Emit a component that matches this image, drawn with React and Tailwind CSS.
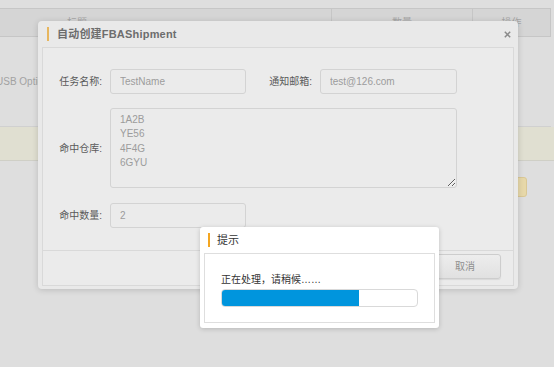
export default function App() {
  const font = "font-['Liberation_Sans','Noto_Sans_CJK_SC',sans-serif]";

  return (
    <div className={`relative w-[554px] h-[367px] overflow-hidden bg-[#dedede] ${font}`}>
      {/* page behind the overlay */}
      <div className="pt-[8px]">
        <div className="w-[551px] h-[29px] flex border-y border-r border-[#c6c6c6] bg-[#d5d5d5] text-[10px] text-[#a6a6a6]">
          <div className="w-[331px] pl-[67px] flex items-center">标题</div>
          <div className="w-[141px] border-l border-[#c6c6c6] flex items-center justify-center">数量</div>
          <div className="flex-1 border-l border-[#c6c6c6] flex items-center justify-center">操作</div>
        </div>

        <div className="w-[551px] h-[90px] flex items-center border-b border-[#d0d0d0] text-[10px] text-[#a2a2a2]">
          <div className="-ml-[4px] whitespace-nowrap">USB Optic</div>
        </div>

        <div className="w-[554px] h-[34px] bg-[#e0dfd1] border-b border-[#cfcfc6]" />

        <div className="w-[551px] h-[52px] flex">
          <div className="w-[331px]" />
          <div className="w-[141px]" />
          <div className="flex-1 flex items-center justify-center">
            <div className="w-[30px] h-[20px] rounded-[3px] bg-[#e7d8a9] border border-[#dac895]" />
          </div>
        </div>
      </div>

      {/* 自动创建FBAShipment dialog (dimmed) */}
      <div className="absolute left-[38px] top-[21px] w-[480px] h-[268px] rounded-[4px] bg-[#e9e9e9] shadow-[0_1px_6px_rgba(0,0,0,0.16)] flex flex-col px-[4px] pb-[3px]">
        <div className="h-[26px] flex items-center pl-[5px] pr-[3px]">
          <div className="w-[2px] h-[14px] bg-[#e7b65e]" />
          <div className="ml-[8px] text-[11px] font-bold text-[#6d6d6d] tracking-[0.2px]">自动创建FBAShipment</div>
          <svg className="ml-auto" width="7" height="7" viewBox="0 0 7 7">
            <path d="M0.8 0.8L6.2 6.2M6.2 0.8L0.8 6.2" stroke="#8a8a8a" strokeWidth="1.5" />
          </svg>
        </div>

        <div className="flex-1 flex flex-col border border-[#d9d9d9] bg-[#ebebeb]">
          <div className="h-[202px] pt-[21px] text-[10px]">
            <div className="flex items-center">
              <div className="w-[59px] text-right text-[#5a5a5a]">任务名称:</div>
              <input
                readOnly
                value="TestName"
                className="ml-[8px] w-[136px] h-[25px] rounded-[3px] border border-[#d3d3d3] bg-[#ebebeb] pl-[9px] text-[10px] text-[#9c9c9c] outline-none"
              />
              <div className="w-[66px] text-right text-[#5a5a5a]">通知邮箱:</div>
              <input
                readOnly
                value="test@126.com"
                className="ml-[8px] w-[137px] h-[25px] rounded-[3px] border border-[#d3d3d3] bg-[#ebebeb] pl-[9px] text-[10px] text-[#9c9c9c] outline-none"
              />
            </div>

            <div className="mt-[14px] flex items-center">
              <div className="w-[59px] text-right text-[#5a5a5a]">命中仓库:</div>
              <textarea
                readOnly
                value={"1A2B\nYE56\n4F4G\n6GYU"}
                className="ml-[8px] w-[347px] h-[80px] rounded-[3px] border border-[#d3d3d3] bg-[#ebebeb] pl-[9px] pt-[4px] text-[10px] leading-[14.3px] text-[#9c9c9c] outline-none"
              />
            </div>

            <div className="mt-[15px] flex items-center">
              <div className="w-[59px] text-right text-[#5a5a5a]">命中数量:</div>
              <input
                readOnly
                value="2"
                className="ml-[8px] w-[136px] h-[25px] rounded-[3px] border border-[#d3d3d3] bg-[#ebebeb] pl-[9px] text-[10px] text-[#9c9c9c] outline-none"
              />
            </div>
          </div>

          <div className="flex-1 border-t border-[#d9d9d9] flex justify-end items-start pt-[3px] pr-[12px]">
            <button className="w-[72px] h-[25px] rounded-[3px] border border-[#cdcdcd] bg-gradient-to-b from-[#ededed] to-[#e1e1e1] shadow-[0_1px_1px_rgba(0,0,0,0.08)] text-[10px] text-[#8e8e8e]">
              取消
            </button>
          </div>
        </div>
      </div>

      {/* 提示 dialog */}
      <div className="absolute left-[200px] top-[227px] w-[239px] h-[101px] rounded-[3px] bg-white shadow-[0_1px_5px_rgba(0,0,0,0.18)] flex flex-col px-[4px] pb-[5px]">
        <div className="h-[26px] flex items-center pl-[4px]">
          <div className="w-[2px] h-[14px] bg-[#f4a621]" />
          <div className="ml-[7px] text-[11px] text-[#333333]">提示</div>
        </div>
        <div className="flex-1 border border-[#dedede] px-[16px] pt-[19px]">
          <div className="text-[10px] leading-[14px] text-[#333333]">正在处理，请稍候……</div>
          <div className="mt-[2px] h-[18px] rounded-[4px] border border-[#d9d9d9] bg-white overflow-hidden">
            <div className="h-full w-[70%] bg-[#0095dd]" />
          </div>
        </div>
      </div>
    </div>
  );
}
